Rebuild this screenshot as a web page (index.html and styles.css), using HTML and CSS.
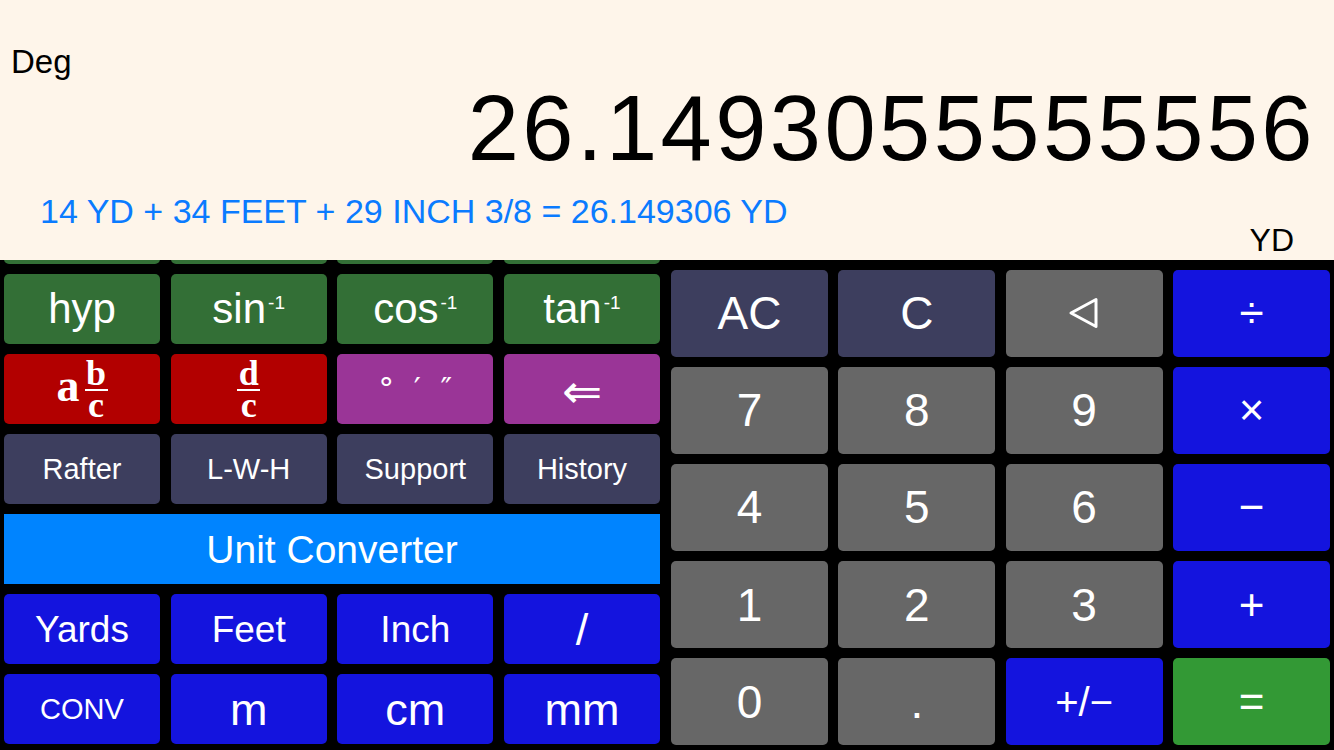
FILE: index.html
```html
<!DOCTYPE html>
<html lang="en">
<head>
<meta charset="utf-8">
<title>Calculator</title>
<link rel="stylesheet" href="styles.css">
</head>
<body>
<div class="app">
  <header class="display">
    <div class="mode">Deg</div>
    <div class="result">26.1493055555556</div>
    <div class="expr">14 YD + 34 FEET + 29 INCH 3/8 = 26.149306 YD</div>
    <div class="unit">YD</div>
  </header>
  <main class="keypad">
    <section class="sci">
      <button class="key green"></button>
      <button class="key green"></button>
      <button class="key green"></button>
      <button class="key green"></button>

      <button class="key green fn">hyp</button>
      <button class="key green fn"><span class="lbl">sin<span class="sup">-1</span></span></button>
      <button class="key green fn"><span class="lbl">cos<span class="sup">-1</span></span></button>
      <button class="key green fn"><span class="lbl">tan<span class="sup">-1</span></span></button>

      <button class="key red">
        <span class="mixed">
          <span class="whole">a</span>
          <span class="frac"><span class="fnum">b</span><span class="fbar"></span><span class="fden">c</span></span>
        </span>
      </button>
      <button class="key red">
        <span class="frac"><span class="fnum">d</span><span class="fbar"></span><span class="fden">c</span></span>
      </button>
      <button class="key purple dms">°&nbsp;&nbsp;′&nbsp;&nbsp;″</button>
      <button class="key purple arrow">⇐</button>

      <button class="key slate small">Rafter</button>
      <button class="key slate small">L-W-H</button>
      <button class="key slate small">Support</button>
      <button class="key slate small">History</button>

      <button class="key sky wide">Unit Converter</button>

      <button class="key royal unitk">Yards</button>
      <button class="key royal unitk">Feet</button>
      <button class="key royal unitk">Inch</button>
      <button class="key royal big">/</button>

      <button class="key royal conv">CONV</button>
      <button class="key royal big">m</button>
      <button class="key royal big">cm</button>
      <button class="key royal big">mm</button>
    </section>

    <section class="pad">
      <button class="key slate num">AC</button>
      <button class="key slate num">C</button>
      <button class="key gray">
        <svg class="back" width="32" height="34" viewBox="0 0 32 34"><path d="M3 17 L28 3.5 L28 30.5 Z" fill="none" stroke="#fff" stroke-width="3" stroke-linejoin="round"/></svg>
      </button>
      <button class="key royal op">÷</button>

      <button class="key gray num">7</button>
      <button class="key gray num">8</button>
      <button class="key gray num">9</button>
      <button class="key royal op">×</button>

      <button class="key gray num">4</button>
      <button class="key gray num">5</button>
      <button class="key gray num">6</button>
      <button class="key royal op">−</button>

      <button class="key gray num">1</button>
      <button class="key gray num">2</button>
      <button class="key gray num">3</button>
      <button class="key royal op">+</button>

      <button class="key gray num">0</button>
      <button class="key gray num">.</button>
      <button class="key royal pm">+/−</button>
      <button class="key green2 op">=</button>
    </section>
  </main>
</div>
</body>
</html>
```

FILE: styles.css
```css
* {
  box-sizing: border-box;
  margin: 0;
  padding: 0;
}

html, body {
  width: 1334px;
  height: 750px;
  overflow: hidden;
  background: #000;
  font-family: "Liberation Sans", Arial, sans-serif;
}

.app {
  display: flex;
  flex-direction: column;
  height: 750px;
}

/* ---------- display ---------- */
.display {
  flex: none;
  height: 260px;
  background: #fef5ea;
  color: #000;
  display: flex;
  flex-direction: column;
}

.mode {
  font-size: 33px;
  line-height: 33px;
  margin-top: 45px;
  padding-left: 11px;
}

.result {
  font-size: 92px;
  line-height: 92px;
  margin-top: 4px;
  text-align: right;
  padding-right: 18px;
  letter-spacing: 3.45px;
}

.expr {
  font-size: 34px;
  line-height: 28px;
  margin-top: 23px;
  padding-left: 40px;
  color: #0a7bff;
}

.unit {
  font-size: 32px;
  line-height: 26px;
  margin-top: 2px;
  text-align: right;
  padding-right: 40px;
}

/* ---------- keypad ---------- */
.keypad {
  flex: 1;
  display: flex;
  gap: 11px;
  padding: 0 4px;
  overflow: hidden;
  align-items: flex-start;
}

.sci {
  flex: none;
  width: 656px;
  display: grid;
  grid-template-columns: repeat(4, 1fr);
  grid-auto-rows: 70px;
  gap: 10px 10.67px;
  margin-top: -66px;
}

.pad {
  flex: none;
  width: 659px;
  display: grid;
  grid-template-columns: repeat(4, 1fr);
  grid-template-rows: repeat(5, 86.6px);
  gap: 10.5px 10.33px;
  padding-top: 10px;
}

.key {
  border: 0;
  border-radius: 5px;
  color: #fff;
  font-family: inherit;
  display: flex;
  align-items: center;
  justify-content: center;
  line-height: 1;
  padding: 0;
  white-space: nowrap;
}

.green  { background: #336f36; }
.red    { background: #b20000; }
.purple { background: #9a3597; }
.slate  { background: #3d3e5e; }
.sky    { background: #0084ff; }
.royal  { background: #1414de; }
.gray   { background: #676767; }
.green2 { background: #339935; }

/* left panel labels */
.fn {
  font-size: 42px;
}

.lbl {
  display: inline-block;
  line-height: 1;
}

.sup {
  font-size: 19px;
  vertical-align: 14px;
  margin-left: 2px;
}

.small {
  font-size: 29px;
}

.wide {
  grid-column: 1 / -1;
  border-radius: 0;
  font-size: 39px;
}

.unitk {
  font-size: 37px;
}

.big {
  font-size: 45px;
}

.conv {
  font-size: 29px;
}

.dms {
  font-size: 31px;
  font-family: "DejaVu Sans", "Liberation Sans", sans-serif;
  padding-bottom: 2px;
}

.arrow {
  font-family: "DejaVu Sans", sans-serif;
  font-size: 48px;
  padding-top: 3px;
}

/* fractions */
.mixed {
  display: inline-flex;
  align-items: center;
  gap: 5px;
}

.whole {
  font-family: "Liberation Serif", "Times New Roman", serif;
  font-weight: bold;
  font-size: 46px;
  line-height: 46px;
  margin-bottom: 6px;
}

.frac {
  display: inline-flex;
  flex-direction: column;
  align-items: center;
  font-family: "Liberation Serif", "Times New Roman", serif;
  font-weight: bold;
  font-size: 36px;
}

.fnum,
.fden {
  line-height: 26px;
}

.fbar {
  width: 23px;
  height: 2px;
  background: #fff;
  margin: 3px 0 1px;
}

/* right panel labels */
.num {
  font-size: 46px;
}

.op {
  font-size: 44px;
}

.pm {
  font-size: 40px;
}
```
